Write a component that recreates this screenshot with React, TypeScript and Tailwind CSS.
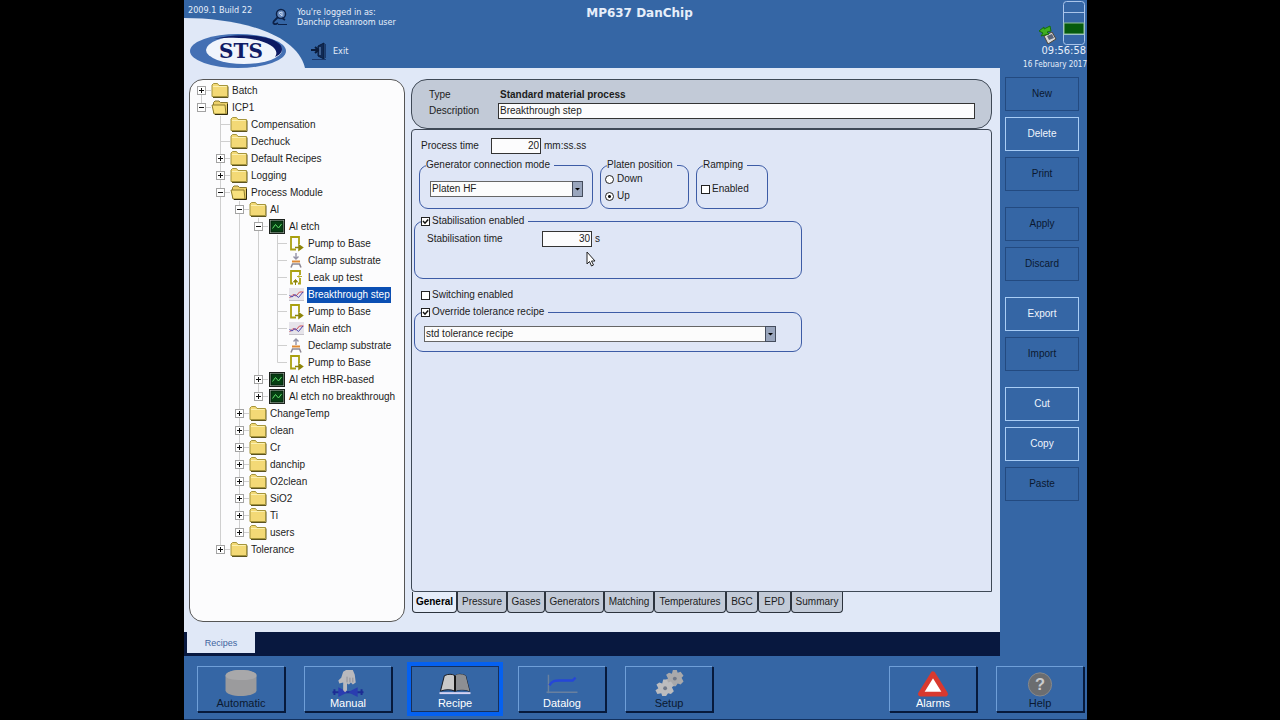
import { useState, type ReactNode } from "react";
import { clsx } from "clsx";

type IconName = "folder" | "open" | "scope" | "pump" | "clamp" | "declamp" | "leak" | "etch";

interface TreeNode {
  label: string;
  icon: IconName;
  expandable?: boolean;
  children?: TreeNode[];
}

const tree: TreeNode[] = [
  { label: "Batch", icon: "folder", expandable: true },
  {
    label: "ICP1",
    icon: "open",
    expandable: true,
    children: [
      { label: "Compensation", icon: "folder" },
      { label: "Dechuck", icon: "folder" },
      { label: "Default Recipes", icon: "folder", expandable: true },
      { label: "Logging", icon: "folder", expandable: true },
      {
        label: "Process Module",
        icon: "open",
        expandable: true,
        children: [
          {
            label: "Al",
            icon: "folder",
            expandable: true,
            children: [
              {
                label: "Al etch",
                icon: "scope",
                expandable: true,
                children: [
                  { label: "Pump to Base", icon: "pump" },
                  { label: "Clamp substrate", icon: "clamp" },
                  { label: "Leak up test", icon: "leak" },
                  { label: "Breakthrough step", icon: "etch" },
                  { label: "Pump to Base", icon: "pump" },
                  { label: "Main etch", icon: "etch" },
                  { label: "Declamp substrate", icon: "declamp" },
                  { label: "Pump to Base", icon: "pump" },
                ],
              },
              { label: "Al etch HBR-based", icon: "scope", expandable: true },
              { label: "Al etch no breakthrough", icon: "scope", expandable: true },
            ],
          },
          { label: "ChangeTemp", icon: "folder", expandable: true },
          { label: "clean", icon: "folder", expandable: true },
          { label: "Cr", icon: "folder", expandable: true },
          { label: "danchip", icon: "folder", expandable: true },
          { label: "O2clean", icon: "folder", expandable: true },
          { label: "SiO2", icon: "folder", expandable: true },
          { label: "Ti", icon: "folder", expandable: true },
          { label: "users", icon: "folder", expandable: true },
        ],
      },
      { label: "Tolerance", icon: "folder", expandable: true },
    ],
  },
];

const tabs = [
  { label: "General", width: "w-[45px]" },
  { label: "Pressure", width: "w-[50px]" },
  { label: "Gases", width: "w-[38px]" },
  { label: "Generators", width: "w-[59px]" },
  { label: "Matching", width: "w-[50px]" },
  { label: "Temperatures", width: "w-[72px]" },
  { label: "BGC", width: "w-[32px]" },
  { label: "EPD", width: "w-[33px]" },
  { label: "Summary", width: "w-[52px]" },
];

const actionGroups = [
  [
    { label: "New", enabled: false },
    { label: "Delete", enabled: true },
    { label: "Print", enabled: false },
  ],
  [
    { label: "Apply", enabled: false },
    { label: "Discard", enabled: false },
  ],
  [
    { label: "Export", enabled: true },
    { label: "Import", enabled: false },
  ],
  [
    { label: "Cut", enabled: true },
    { label: "Copy", enabled: true },
    { label: "Paste", enabled: false },
  ],
];

function TreeIcon({ name }: { name: IconName }) {
  return (
    <svg viewBox="0 0 18 17" className="h-[17px] w-[18px] shrink-0" aria-hidden="true">
      {name === "folder" && (
        <>
          <path d="M2 15.500H17V4.500" fill="none" stroke="#5c5320" />
          <path d="M1 14.500V3L2.500 1.500H6.500L8 3.500H16.500V14.500Z" fill="#f3d976" stroke="#a5953c" />
          <path d="M2 4.500H15.500" stroke="#fbf0b0" />
        </>
      )}
      {name === "open" && (
        <>
          <path d="M2.500 14V3.500L4 2H8L9.500 3.500H16.500V15H4" fill="#ecd06a" stroke="#8a7a30" />
          <path d="M1 6H14L15 15H3Z" fill="#f8e17e" stroke="#8d7d2c" />
          <path d="M16.500 5V15.500H4" fill="none" stroke="#2f2a10" />
        </>
      )}
      {name === "scope" && (
        <>
          <rect x="1.500" y="1.500" width="15" height="14" fill="#b9c2b9" stroke="#1c211c" />
          <rect x="3" y="3" width="12" height="11" fill="#053f12" stroke="#03210a" />
          <path d="M4.500 10.500L7.500 6.500L10.500 10L13.500 6" fill="none" stroke="#5fe06a" />
        </>
      )}
      {name === "pump" && (
        <>
          <path d="M12 9V2H4V14.500H9" fill="none" stroke="#aaa010" strokeWidth="1.800" />
          <path d="M8 12.500H13M12 10L15.500 12.500L12 15Z" fill="#8d8408" stroke="#8d8408" strokeWidth="1.500" />
        </>
      )}
      {name === "leak" && (
        <>
          <path d="M6 14.500H4V2H13V6M13 9V14.500H11" fill="none" stroke="#aaa010" strokeWidth="1.800" />
          <path d="M8.500 16V12M6.500 13L8.500 10.500L10.500 13Z" fill="#8d8408" stroke="#8d8408" />
          <path d="M10 7.500H15M12 6V9" stroke="#b9ae2a" />
        </>
      )}
      {(name === "clamp" || name === "declamp") && (
        <>
          <path
            d={name === "clamp" ? "M9 1V7M6.500 4.500L9 7L11.500 4.500" : "M9 8V2M6.500 4.500L9 2L11.500 4.500"}
            fill="none"
            stroke="#9493a6"
            strokeWidth="1.400"
          />
          <path d="M5 9.500H13" stroke="#e08a34" strokeWidth="2" />
          <path d="M4 15.500L5.500 12H12.500L14 15.500" fill="none" stroke="#8c8692" strokeWidth="1.500" />
        </>
      )}
      {name === "etch" && (
        <>
          <rect x="2" y="2" width="15" height="13" fill="#e6e4ea" />
          <path d="M2 14.500H17" stroke="#c5c2ca" />
          <path d="M2.500 12L6 8.500L9 10L12.500 6L16.500 6" fill="none" stroke="#cf4b55" />
          <path d="M2.500 9.500L5 11L8 8.500L11.500 11.500L16 6" fill="none" stroke="#4a46b0" />
        </>
      )}
    </svg>
  );
}

interface TreeRowsProps {
  nodes: TreeNode[];
  guides: boolean[];
}

function TreeRows({ nodes, guides }: TreeRowsProps) {
  return (
    <ul>
      {nodes.map((node, index) => {
        const last = index === nodes.length - 1;
        const first = index === 0 && guides.length === 0;
        const selected = node.label === "Breakthrough step";
        return (
          <li key={index}>
            <div className="flex h-[17px] items-center">
              {guides.map((line, level) => (
                <span key={level} className="flex h-full w-[19px] shrink-0 justify-center">
                  {line && <span className="w-px bg-[#cfcfcf]" />}
                </span>
              ))}
              <svg viewBox="0 0 19 17" className="h-[17px] w-[19px] shrink-0" aria-hidden="true">
                <path
                  d={`M9.500 ${first ? 8.5 : 0}V${last ? 8.5 : 17}M9.500 8.500H19`}
                  fill="none"
                  stroke="#cfcfcf"
                />
                {node.expandable && (
                  <>
                    <rect x="5.500" y="4.500" width="8" height="8" fill="#fff" stroke="#a3a3a3" />
                    <path d={node.children ? "M7 8.500H12" : "M7 8.500H12M9.500 6V11"} stroke="#111" />
                  </>
                )}
              </svg>
              <TreeIcon name={node.icon} />
              <button
                type="button"
                className={clsx(
                  "ml-[2px] h-4 px-px whitespace-nowrap",
                  selected ? "bg-[#0b4fb3] text-white" : "text-[#1c1c1c]"
                )}
              >
                {node.label}
              </button>
            </div>
            {node.children && <TreeRows nodes={node.children} guides={[...guides, !last]} />}
          </li>
        );
      })}
    </ul>
  );
}

function Tick({ label, initial = false }: { label: string; initial?: boolean }) {
  const [checked, setChecked] = useState(initial);
  return (
    <label className="flex items-center gap-[2px] whitespace-nowrap">
      <span className="relative flex">
        <input
          type="checkbox"
          checked={checked}
          onChange={() => setChecked(!checked)}
          className="size-[9px] appearance-none border border-[#222] bg-white"
        />
        {checked && (
          <svg viewBox="0 0 9 9" className="pointer-events-none absolute inset-0 size-[9px]">
            <path d="M2 4L4 6.200L7.200 2.500" fill="none" stroke="#111" strokeWidth="1.500" />
          </svg>
        )}
      </span>
      {label}
    </label>
  );
}

function Radio({ label, initial = false }: { label: string; initial?: boolean }) {
  return (
    <label className="flex items-center gap-[3px]">
      <input
        type="radio"
        name="platen"
        defaultChecked={initial}
        className="size-[9px] appearance-none rounded-full border border-[#222] bg-white checked:bg-[radial-gradient(circle,#111_1px,#fff_2px)]"
      />
      {label}
    </label>
  );
}

function DropDown({ value, label }: { value: string; label: string }) {
  return (
    <div className="relative flex h-4">
      <select
        aria-label={label}
        className="w-full appearance-none border border-[#666] bg-[#fcfcfc] pl-px leading-[14px] text-[#1c1c1c]"
      >
        <option>{value}</option>
      </select>
      <svg viewBox="0 0 11 16" className="pointer-events-none absolute top-0 right-0 h-4 w-[11px]">
        <rect x="0.500" y="0.500" width="10" height="15" fill="#9aa6bd" stroke="#444c5c" />
        <path d="M3 7H8L5.500 9.500Z" fill="#000" />
      </svg>
    </div>
  );
}

interface GroupProps {
  legend: ReactNode;
  className: string;
  children: ReactNode;
}

function Group({ legend, className, children }: GroupProps) {
  return (
    <fieldset className={clsx("rounded-[9px] border border-[#3d5ca6]", className)}>
      <legend className="ml-[6px] pr-1 leading-3">{legend}</legend>
      {children}
    </fieldset>
  );
}

interface NavButtonProps {
  label: string;
  enabled?: boolean;
  active?: boolean;
  children: ReactNode;
}

function NavButton({ label, enabled, active, children }: NavButtonProps) {
  return (
    <button
      type="button"
      className={clsx(
        "flex h-[46px] w-[88px] flex-col items-center border text-[11px] leading-3",
        active
          ? "border-[#16305c] outline-4 outline-[#0561f0]"
          : "border-t-[#6f9fd8] border-l-[#6f9fd8] border-r-[#071a3c] border-b-[#071a3c] shadow-[1px_1px_0_#071a3c]",
        enabled ? "text-white" : "text-[#0b1930]"
      )}
    >
      <svg viewBox="0 0 36 31" className="h-[30px] w-9" aria-hidden="true">
        {children}
      </svg>
      {label}
    </button>
  );
}

const gear = "M-2 -9H2L3 -6L6 -7L9 -3L7 -1L9 3L6 6L3 5L1 8H-3L-4 5L-8 6L-10 2L-7 0L-9 -4L-6 -6L-3 -5Z";

function Header() {
  return (
    <header className="flex h-[68px] font-['DejaVu_Sans_Condensed','DejaVu_Sans',sans-serif] text-[#e6eefa]">
      <div className="flex flex-1">
        <div className="relative w-[113px] shrink-0">
          <svg viewBox="0 0 121 68" className="absolute top-0 left-0 h-[68px] w-[121px]" aria-label="STS">
            <path d="M0 18C52 18 112 32 121 68H0Z" fill="#e0e8f7" />
            <ellipse cx="54" cy="51" rx="48" ry="17" fill="#4470b4" />
            <ellipse cx="60" cy="50" rx="38" ry="14" fill="#f1f5fc" />
            <path d="M30 39C56 31 98 36 98 49C98 53 95 55 91 57C99 46 72 34 30 39Z" fill="#0d1a63" />
            <text
              x="57"
              y="58"
              textAnchor="middle"
              fontFamily="DejaVu Serif, serif"
              fontSize="20"
              fontWeight="bold"
              fill="#101c66"
            >
              STS
            </text>
            <g fill="none" stroke="#0c2148">
              <circle cx="97" cy="14" r="4.500" fill="#6487bb" strokeWidth="1.500" />
              <path d="M94 17L90 21C88 24 91 25 94 23M98 18L101 20" strokeWidth="1.800" />
              <path d="M94 24.500H103" />
              <path d="M95 13L98 12L98 16Z" stroke="#c5d6ee" />
            </g>
          </svg>
          <p className="relative pt-1 pl-1 text-[9px] leading-3 whitespace-nowrap">2009.1 Build 22</p>
        </div>
        <div className="relative pt-[7px] text-[9px] leading-[10px] whitespace-nowrap">
          <p>You&apos;re logged in as:</p>
          <p>Danchip cleanroom user</p>
          <button type="button" className="flex items-center gap-[6px] pt-[15px] pl-[14px]">
            <svg viewBox="0 0 16 18" className="h-[18px] w-4" aria-hidden="true">
              <path d="M7 4L13 1V17L7 14Z" fill="#102a55" stroke="#0a1c3c" />
              <path d="M14.500 2V16M1 17.500H15" stroke="#1b3a6e" />
              <path d="M0 8H6M4 5L7.500 8L4 11" fill="none" stroke="#0a1c3c" strokeWidth="2" />
              <path d="M9 5V13" stroke="#6f94c8" />
            </svg>
            Exit
          </button>
        </div>
      </div>
      <h1 className="pt-1 pl-2 font-['DejaVu_Sans',sans-serif] text-[12px] leading-[18px] font-bold">
        MP637 DanChip
      </h1>
      <div className="flex flex-1 flex-col items-end">
        <div className="flex items-end gap-[6px] pt-px pr-[2px]">
          <svg viewBox="0 0 18 20" className="h-5 w-[18px]" aria-hidden="true">
            <path d="M5 11L13 7L17 14L9 19Z" fill="#d7d7d7" stroke="#4d4538" />
            <path d="M8 11L13 9L15 13L10 15Z" fill="#5b6478" />
            <path d="M0 6L5 2V4L11 1L12 6L8 7L10 9L2 11L4 8Z" fill="#3fae22" stroke="#176e0c" />
          </svg>
          <svg viewBox="0 0 22 44" className="h-[44px] w-[22px]" aria-hidden="true">
            <rect x="0.500" y="0.500" width="21" height="43" rx="3" fill="none" stroke="#a9c4ea" />
            <path d="M1 11.500H21M1 33.500H21" stroke="#a9c4ea" />
            <rect x="1" y="22" width="20" height="11" fill="#065a0c" stroke="#8fc09a" />
          </svg>
        </div>
        <time className="pr-px text-[11px] leading-3">09:56:58</time>
        <span className="text-[8px] leading-4">16 February 2017</span>
      </div>
    </header>
  );
}

export default function App() {
  const [tab, setTab] = useState("General");

  return (
    <div className="min-h-screen bg-black pr-[193px] pl-[184px] font-['Liberation_Sans',Arial,sans-serif] text-[10px] leading-4 text-[#1c1c1c]">
      <div className="flex min-h-screen flex-col border-b border-[#12315f] bg-[#3566a5]">
        <Header />

        <div className="flex flex-1">
          <div className="flex flex-1 flex-col">
            <main className="flex flex-1 gap-[6px] bg-[#e0e8f7] pt-[11px] pr-2 pb-[10px] pl-[5px]">
              <nav
                aria-label="Recipe tree"
                className="w-[216px] shrink-0 rounded-[14px] border border-[#555] bg-[#fcfcfd] pt-[2px] pl-[2px]"
              >
                <TreeRows nodes={tree} guides={[]} />
              </nav>

              <section className="flex flex-1 flex-col">
                <div className="grid h-[50px] grid-cols-[69px_1fr] items-center rounded-[16px] border border-[#3f4956] bg-[#c2cad7] pt-[7px] pr-4 pb-[9px] pl-[17px]">
                  <span>Type</span>
                  <strong className="pl-[2px]">Standard material process</strong>
                  <label htmlFor="description">Description</label>
                  <input
                    id="description"
                    defaultValue="Breakthrough step"
                    className="h-4 border border-[#333] bg-[#fcfcfd] pl-px"
                  />
                </div>

                <div className="flex-1 rounded-t-[4px] rounded-bl-[4px] border border-[#3f4956] bg-[#dfe6f6] pt-2 pl-[2px]">
                  <div className="flex items-center pl-[7px]">
                    <label htmlFor="process-time" className="w-[70px]">
                      Process time
                    </label>
                    <input
                      id="process-time"
                      defaultValue="20"
                      className="h-4 w-[50px] border border-[#333] bg-[#fcfcfd] pr-px text-right"
                    />
                    <span className="pl-[3px]">mm:ss.ss</span>
                  </div>

                  <div className="mt-[5px] flex h-[50px] gap-[7px] pl-[5px]">
                    <Group legend="Generator connection mode" className="w-[174px]">
                      <div className="w-[163px] pt-[10px] pl-[10px]">
                        <DropDown value="Platen HF" label="Generator connection mode" />
                      </div>
                    </Group>
                    <Group legend="Platen position" className="w-[89px]">
                      <div className="flex flex-col gap-px pl-1">
                        <Radio label="Down" />
                        <Radio label="Up" initial />
                      </div>
                    </Group>
                    <Group legend="Ramping" className="w-[72px]">
                      <div className="pt-[10px] pl-1">
                        <Tick label="Enabled" />
                      </div>
                    </Group>
                  </div>

                  <Group
                    className="mt-[6px] h-[64px] w-[388px]"
                    legend={<Tick label="Stabilisation enabled" initial />}
                  >
                    <div className="flex items-center pt-1 pl-3">
                      <label htmlFor="stab-time" className="w-[115px]">
                        Stabilisation time
                      </label>
                      <div className="relative flex">
                        <input
                          id="stab-time"
                          defaultValue="30"
                          className="h-4 w-[50px] border border-[#333] bg-[#fcfcfd] pr-px text-right"
                        />
                        <svg
                          viewBox="0 0 10 16"
                          className="pointer-events-none absolute top-5 left-[44px] h-4 w-[10px]"
                          aria-hidden="true"
                        >
                          <path
                            d="M1 1V13L3.500 10.500L5.500 15L7.500 14L5.500 10H9Z"
                            fill="#fff"
                            stroke="#222"
                          />
                        </svg>
                      </div>
                      <span className="pl-[3px]">s</span>
                    </div>
                  </Group>

                  <div className="mt-2 pl-[7px]">
                    <Tick label="Switching enabled" />
                  </div>

                  <Group
                    className="mt-[3px] h-[46px] w-[388px]"
                    legend={<Tick label="Override tolerance recipe" initial />}
                  >
                    <div className="w-[361px] pt-2 pl-[9px]">
                      <DropDown value="std tolerance recipe" label="Tolerance recipe" />
                    </div>
                  </Group>
                </div>

                <div role="tablist" className="flex pl-px">
                  {tabs.map(({ label, width }) => (
                    <button
                      key={label}
                      type="button"
                      role="tab"
                      aria-selected={tab === label}
                      onClick={() => setTab(label)}
                      className={clsx(
                        "h-[21px] rounded-b-[4px] border border-t-0 border-[#2c333d]",
                        width,
                        tab === label ? "bg-[#e6edf9] font-bold text-black" : "bg-[#c2cad7]"
                      )}
                    >
                      {label}
                    </button>
                  ))}
                </div>
                <div className="h-[9px]" />
              </section>
            </main>

            <div className="h-6 bg-[#08183f] pl-[3px]">
              <button type="button" className="block h-[21px] w-[68px] bg-[#e0e8f7] text-[9px] text-[#41649f]">
                Recipes
              </button>
            </div>
          </div>

          <aside className="flex w-[87px] shrink-0 flex-col gap-4 pt-[9px] pl-[5px]">
            {actionGroups.map((group, index) => (
              <div key={index} className="flex flex-col gap-[6px]">
                {group.map(({ label, enabled }) => (
                  <button
                    key={label}
                    type="button"
                    className={clsx(
                      "h-[34px] w-[74px] border",
                      enabled ? "border-[#a9cdf5] text-[#f0f5fd]" : "border-[#234a80] text-[#0b1930]"
                    )}
                  >
                    {label}
                  </button>
                ))}
              </div>
            ))}
          </aside>
        </div>

        <footer className="flex h-[63px] gap-[19px] pt-[10px] pr-[3px] pl-[13px]">
          <NavButton label="Automatic">
            <path d="M2 9C2 1 34 1 34 9V24C34 32 2 32 2 24Z" fill="#9b9b9d" />
            <path d="M2 9C2 15 34 15 34 9C34 1 2 1 2 9Z" fill="#a8a8aa" />
          </NavButton>
          <NavButton label="Manual" enabled>
            <path d="M2 26H34M4 23V29M32 23V29" stroke="#1c2c94" strokeWidth="2" />
            <path d="M8 21L28 31V21L8 31Z" fill="#2a3db0" />
            <path
              d="M13 5L16 3L23 3L25 8L26 16L23 18L21 16L19 18L17 17V24L15 26L13 24V16L9 17L8 14L11 11Z"
              fill="#b9b9bd"
            />
            <path d="M17 16V10M20 16V11M23 16V11" stroke="#8e8f96" />
          </NavButton>
          <NavButton label="Recipe" enabled active>
            <path d="M3 25L7 9C11 7 15 7 18 9C21 7 25 7 29 9L33 25C28 23 22 23 18 25C14 23 8 23 3 25Z" fill="#c9c9c9" stroke="#15181f" />
            <path d="M18 9C21 7 25 7 29 9L33 25C28 23 22 23 18 25Z" fill="#8d8f93" />
            <path d="M18 9V25" stroke="#111" strokeWidth="2" />
            <path d="M2 27H34" stroke="#d5d3f3" strokeWidth="2" />
          </NavButton>
          <NavButton label="Datalog" enabled>
            <path d="M4 8V27M2 26H34" stroke="#69809f" strokeWidth="1.500" />
            <path d="M5 19C8 14 11 14 15 14H29L32 11" fill="none" stroke="#2546d8" strokeWidth="2.500" />
          </NavButton>
          <NavButton label="Setup">
            <path d={gear} transform="translate(24 12)" fill="#a9a9ab" />
            <circle cx="24" cy="12" r="2" fill="#6f7888" />
            <path d={gear} transform="translate(14 22)" fill="#bcbcbe" />
            <circle cx="14" cy="22" r="2" fill="#6f7888" />
          </NavButton>
          <div className="flex-1" />
          <NavButton label="Alarms" enabled>
            <path d="M18 7L31 28H5Z" fill="#fff" stroke="#d8392f" strokeWidth="5" strokeLinejoin="round" />
          </NavButton>
          <NavButton label="Help">
            <circle cx="18" cy="18" r="12" fill="#6b6d70" stroke="#87898c" />
            <text x="18" y="24" textAnchor="middle" fontSize="17" fontWeight="bold" fill="#c9cbce">
              ?
            </text>
          </NavButton>
        </footer>
      </div>
    </div>
  );
}
